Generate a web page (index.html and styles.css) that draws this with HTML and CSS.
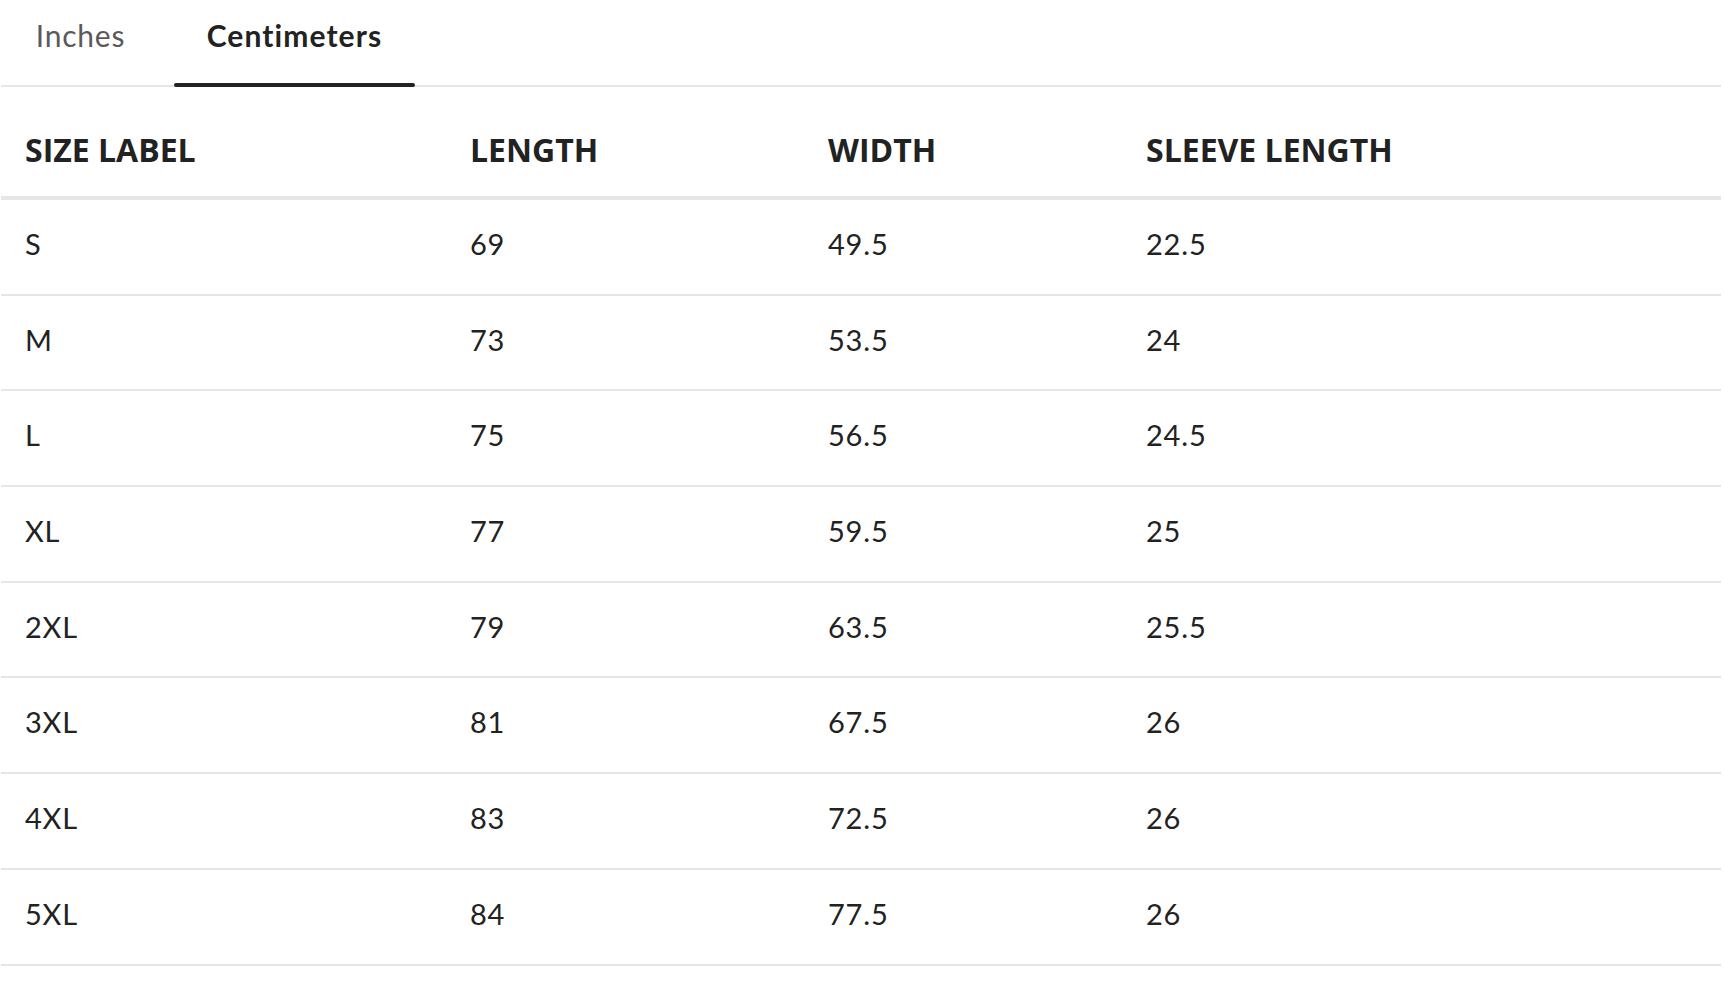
FILE: index.html
```html
<!DOCTYPE html>
<html lang="en">
<head>
<meta charset="utf-8">
<title>Size Guide</title>
<link rel="stylesheet" href="styles.css">
</head>
<body>
<div class="size-guide">
  <div class="tabs">
    <button class="tab tab-inches">Inches</button>
    <button class="tab tab-cm tab-active">Centimeters</button>
  </div>
  <table class="size-table">
    <colgroup>
      <col class="col-size">
      <col class="col-length">
      <col class="col-width">
      <col class="col-sleeve">
    </colgroup>
    <thead>
      <tr><th>SIZE LABEL</th><th>LENGTH</th><th>WIDTH</th><th>SLEEVE LENGTH</th></tr>
    </thead>
    <tbody>
      <tr><td>S</td><td>69</td><td>49.5</td><td>22.5</td></tr>
      <tr><td>M</td><td>73</td><td>53.5</td><td>24</td></tr>
      <tr><td>L</td><td>75</td><td>56.5</td><td>24.5</td></tr>
      <tr><td>XL</td><td>77</td><td>59.5</td><td>25</td></tr>
      <tr><td>2XL</td><td>79</td><td>63.5</td><td>25.5</td></tr>
      <tr><td>3XL</td><td>81</td><td>67.5</td><td>26</td></tr>
      <tr><td>4XL</td><td>83</td><td>72.5</td><td>26</td></tr>
      <tr><td>5XL</td><td>84</td><td>77.5</td><td>26</td></tr>
    </tbody>
  </table>
</div>
</body>
</html>
```
FILE: styles.css
```css
html, body {
  margin: 0;
  padding: 0;
  background: #ffffff;
}

body {
  font-family: "Lato", "Open Sans", sans-serif;
  color: #222222;
}

.size-guide {
  width: 1720px;
  margin-left: 1px;
}

.tabs {
  display: flex;
  align-items: flex-start;
  height: 85px;
  border-bottom: 2px solid #e6e6e6;
}

.tab {
  position: relative;
  display: block;
  box-sizing: border-box;
  height: 85px;
  margin: 0;
  padding: 15px 0 30px;
  border: 0;
  background: transparent;
  font-family: "Lato", "Open Sans", sans-serif;
  font-size: 30px;
  line-height: 40px;
  letter-spacing: 0.8px;
  text-align: center;
  cursor: pointer;
}

.tab-inches {
  width: 157px;
  margin-left: 1px;
  color: #5a5a5a;
  font-weight: 400;
}

.tab-cm {
  width: 241px;
  margin-left: 15px;
  color: #222222;
  font-weight: 700;
  letter-spacing: 1.1px;
}

.tab-active::after {
  content: "";
  position: absolute;
  left: 0;
  right: 0;
  bottom: -2px;
  height: 4px;
  border-radius: 2px;
  background: #222222;
}

.size-table {
  width: 1720px;
  border-collapse: separate;
  border-spacing: 0;
  table-layout: fixed;
}

.col-size { width: 445px; }
.col-length { width: 358px; }
.col-width { width: 318px; }

.size-table th {
  padding: 43px 0 26px 24px;
  font-family: "Open Sans", sans-serif;
  font-size: 32px;
  line-height: 40px;
  font-weight: 700;
  text-align: left;
  color: #222222;
  border-bottom: 4px solid #e6e6e6;
}

.size-table td {
  padding: 24px 0 29.7px 24px;
  font-family: "Lato", "Open Sans", sans-serif;
  font-size: 29px;
  line-height: 40px;
  letter-spacing: 0.8px;
  font-weight: 400;
  color: #222222;
  border-bottom: 2px solid #e6e6e6;
}
```
